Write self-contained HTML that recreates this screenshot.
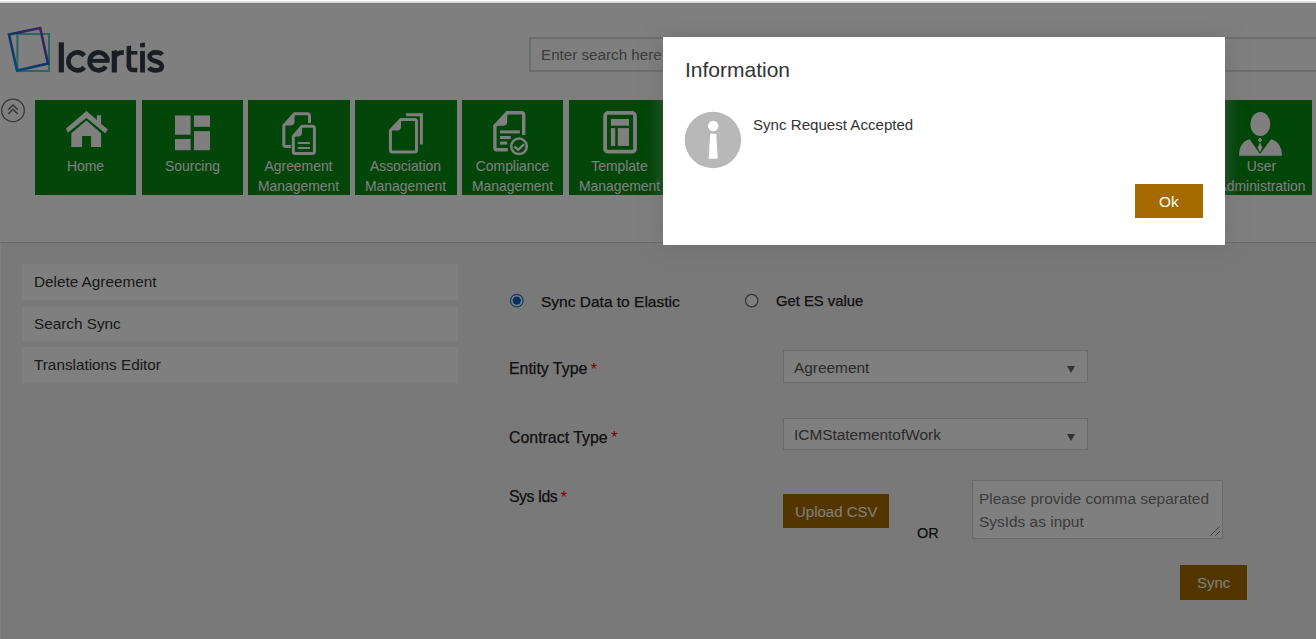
<!DOCTYPE html>
<html><head><meta charset="utf-8">
<style>
*{margin:0;padding:0;box-sizing:border-box}
html,body{width:1316px;height:639px;overflow:hidden;background:#fff;font-family:"Liberation Sans",sans-serif}
.a{position:absolute}
.t{position:absolute;white-space:nowrap;line-height:1}
#page{position:absolute;left:0;top:0;width:1316px;height:639px;background:#fff}
.tile{position:absolute;top:100px;width:101px;height:95px;background:#078c12}
.tl{position:absolute;left:0;width:101px;text-align:center;color:#fff;font-size:13.9px;line-height:20px;white-space:nowrap}
.side{position:absolute;left:22px;width:436px;height:36px;background:#fff}
.side span{position:absolute;left:12px;top:9.6px;font-size:15.3px;line-height:15px;color:#333;white-space:nowrap}
.lbl{position:absolute;font-size:15.5px;line-height:15px;color:#222;white-space:nowrap;-webkit-text-stroke:0.25px #222}
.req{color:#f00;margin-left:3.5px;font-size:16px;position:relative;top:0.5px;-webkit-text-stroke:0}
.sel{position:absolute;left:783px;width:305px;background:#fff;border:1px solid #d5d5d5}
.sel span{position:absolute;left:10px;font-size:15.4px;line-height:15px;color:#555;white-space:nowrap}
.arr{position:absolute;left:283px;width:0;height:0;border-left:4.5px solid transparent;border-right:4.5px solid transparent;border-top:7px solid #666}
.btn{position:absolute;background:#a66b00;color:#fff;white-space:nowrap;line-height:15px}
#ov{position:absolute;left:0;top:3px;width:1316px;height:636px;background:rgba(0,0,0,0.5)}
#modal{position:absolute;left:663px;top:37px;width:562px;height:208px;background:#fff;box-shadow:0 0 18px rgba(100,100,100,0.6)}
</style></head>
<body>
<div id="page">
  <!-- logo -->
  <svg class="a" style="left:0;top:20px" width="60" height="60" viewBox="0 20 60 60">
    <defs>
      <linearGradient id="lg" x1="0" y1="1" x2="1" y2="0">
        <stop offset="0" stop-color="#1c9ae6"/>
        <stop offset="0.5" stop-color="#2262c8"/>
        <stop offset="1" stop-color="#9840aa"/>
      </linearGradient>
    </defs>
    <rect x="17.4" y="34" width="31.6" height="37" fill="none" stroke="#5ec8c2" stroke-width="2.1"/>
    <path d="M9 34.6 L40.2 28 L48 63.6 L17 70.6 Z" fill="none" stroke="url(#lg)" stroke-width="2.6" stroke-linejoin="miter"/>
  </svg>
  <svg class="a" style="left:0;top:0" width="180" height="90" viewBox="0 0 180 90">
    <g fill="#343a44">
      <rect x="58.7" y="42.3" width="5.2" height="30.1"/>
      <rect x="88" y="58.9" width="21.4" height="3.9"/>
      <path d="M111.7 51 L116.9 50 L116.9 72.4 L111.7 72.4 Z"/>
      <path d="M126.6 46.2 L131.1 45.4 L131.1 67 L126.6 67 Z"/>
      <rect x="128.8" y="51" width="8.5" height="3.6"/>
      <path d="M140.1 51 L144.9 51 L144.9 72.4 L140.1 72.4 Z M140.1 43.2 L144.9 42.5 L144.9 47.3 L140.1 47.3 Z"/>
    </g>
    <g fill="none" stroke="#343a44" stroke-width="4.7">
      <path d="M84.26 55.65 A8.95 8.95 0 1 0 84.26 67.15"/>
      <path d="M107.5 60.6 A8.95 8.95 0 1 0 105.9 66.5"/>
      <path d="M114.3 57.5 C115.5 53.8 118.5 52.4 123.8 52.4" stroke-width="4.6"/>
      <path d="M128.85 64 C128.85 69.5 130.8 70.1 133 70.1 L137.3 70.1" stroke-width="4.5"/>
      <path d="M162.2 54.6 C160.5 52.5 158 52.4 155.7 52.4 C152.5 52.4 149.6 53.8 149.6 56.5 C149.6 59.5 152.5 60.3 155.7 61.2 C159 62.1 161.9 63.2 161.9 66.5 C161.9 69.2 159 70.4 155.7 70.4 C152.7 70.4 150.3 69.6 148.9 67.6" stroke-width="4.6"/>
    </g>
  </svg>

  <!-- search -->
  <div class="a" style="left:529px;top:37px;width:800px;height:35px;border:2px solid #dadada;background:#fff"></div>
  <div class="t" style="left:541px;top:47px;font-size:15.2px;color:#777">Enter search here...</div>

  <!-- collapse -->
  <svg class="a" style="left:0;top:97px" width="28" height="28" viewBox="0 0 28 28">
    <circle cx="13" cy="13.4" r="11.3" fill="none" stroke="#666" stroke-width="1.25"/>
    <path d="M8.2 12.8 L13 8.1 L17.8 12.8 M8.2 17 L13 12.3 L17.8 17" fill="none" stroke="#666" stroke-width="1.4"/>
  </svg>

  <div id="tiles">
<div class="tile" style="left:35px"><svg class="a" style="left:0;top:0" width="101" height="95" viewBox="0 0 101 95"><path d="M31.1 28.5 L51.4 11.1 L61.9 20.1 L61.9 15.2 L66.1 15.2 L66.1 23.7 L72.9 29.5 L70.2 33.2 L51.4 17.9 L32.8 32.8 Z" fill="#fff"/><path d="M51.4 20.6 L66.1 33.2 L66.1 46.9 L56.1 46.9 L56.1 36.1 L47.1 36.1 L47.1 46.9 L36.3 46.9 L36.3 33.2 Z" fill="#fff"/></svg><div class="tl" style="top:56px">Home</div></div>
<div class="tile" style="left:142px"><svg class="a" style="left:0;top:0" width="101" height="95" viewBox="0 0 101 95"><rect x="33" y="15.5" width="15.6" height="19.2" fill="#fff"/><rect x="33" y="39" width="15.6" height="11.2" fill="#fff"/><rect x="52" y="15.5" width="16" height="11.3" fill="#fff"/><rect x="52" y="31.2" width="16" height="19" fill="#fff"/></svg><div class="tl" style="top:56px">Sourcing</div></div>
<div class="tile" style="left:248px;width:102px"><svg class="a" style="left:0;top:0" width="101" height="95" viewBox="0 0 101 95"><path d="M42.9 46.5 L37.8 46.5 Q35.8 46.5 35.8 44.5 L35.8 25.5 L46.5 13.8 L59.5 13.8 Q61.5 13.8 61.5 15.8 L61.5 23" fill="none" stroke="#fff" stroke-width="3"/><path d="M35.8 25.5 L46.5 13.8 L46.5 21.5 Q46.5 25.5 42.5 25.5 Z" fill="#fff"/><path d="M45.3 36.5 L45.3 51.4 Q45.3 53.4 47.3 53.4 L64.4 53.4 Q66.4 53.4 66.4 51.4 L66.4 28.3 Q66.4 26.3 64.4 26.3 L54 26.3 Z" fill="none" stroke="#fff" stroke-width="3" stroke-linejoin="round"/><path d="M45.3 36.5 L54 26.3 L54 32.5 Q54 36.5 50 36.5 Z" fill="#fff"/><path d="M49.8 42.9 H61.9 M49.8 48 H61.9" stroke="#fff" stroke-width="2"/></svg><div class="tl" style="top:56px">Agreement</div><div class="tl" style="top:76px">Management</div></div>
<div class="tile" style="left:355px;width:102px"><svg class="a" style="left:0;top:0" width="101" height="95" viewBox="0 0 101 95"><path d="M51.1 14.7 H66.4 V44.6" fill="none" stroke="#fff" stroke-width="3"/><path d="M35.4 30.5 L35.4 50.1 Q35.4 52.1 37.4 52.1 L59.5 52.1 Q61.5 52.1 61.5 50.1 L61.5 21.4 Q61.5 19.4 59.5 19.4 L46 19.4 Z" fill="none" stroke="#fff" stroke-width="3" stroke-linejoin="round"/><path d="M35.4 30.5 L46 19.4 L46 26.5 Q46 30.5 42 30.5 Z" fill="#fff"/></svg><div class="tl" style="top:56px">Association</div><div class="tl" style="top:76px">Management</div></div>
<div class="tile" style="left:462px"><svg class="a" style="left:0;top:0" width="101" height="95" viewBox="0 0 101 95"><path d="M45.8 49.8 L34.9 49.8 Q32.9 49.8 32.9 47.8 L32.9 26 L45.2 12.7 L59.7 12.7 Q61.7 12.7 61.7 14.7 L61.7 35.1" fill="none" stroke="#fff" stroke-width="3.4"/><path d="M32.9 26 L45.2 12.7 L45.2 21.5 Q45.2 25.7 41 25.7 Z" fill="#fff"/><rect x="38" y="30.4" width="19.9" height="3" fill="#fff"/><rect x="38" y="36" width="10.8" height="3" fill="#fff"/><rect x="38" y="41.6" width="7.2" height="3" fill="#fff"/><circle cx="57" cy="46.3" r="7.8" fill="none" stroke="#fff" stroke-width="2.5"/><path d="M52.3 46.3 L56.1 49.8 L62.2 44.2" fill="none" stroke="#fff" stroke-width="2.5"/></svg><div class="tl" style="top:56px">Compliance</div><div class="tl" style="top:76px">Management</div></div>
<div class="tile" style="left:569px;width:102px"><svg class="a" style="left:0;top:0" width="101" height="95" viewBox="0 0 101 95"><rect x="36.1" y="12.9" width="29.9" height="38.8" rx="3" fill="none" stroke="#fff" stroke-width="3.8"/><rect x="41.9" y="19" width="18.1" height="6.7" fill="#fff"/><rect x="41.9" y="28.1" width="4.3" height="17.8" fill="#fff"/><rect x="48.8" y="28.1" width="11.2" height="17.8" fill="#fff"/></svg><div class="tl" style="top:56px">Template</div><div class="tl" style="top:76px">Management</div></div>
<div class="tile" style="left:675px"></div>
<div class="tile" style="left:782px"></div>
<div class="tile" style="left:889px"></div>
<div class="tile" style="left:996px"></div>
<div class="tile" style="left:1103px"></div>
<div class="tile" style="left:1211px"><svg class="a" style="left:-1px;top:0" width="101" height="95" viewBox="0 0 101 95"><ellipse cx="50.3" cy="23.9" rx="10" ry="12" fill="#fff"/><path d="M29.1 55.8 C29.1 46 33 41 39.6 39.3 L50 54 L61.1 39.3 C67.5 41 71.9 46 71.9 55.8 Z" fill="#fff"/><path d="M50 37.6 L52.2 40 L50 42.4 L47.8 40 Z M50 42.6 L52.4 47.5 L50 52.6 L47.6 47.5 Z" fill="#fff"/></svg><div class="tl" style="top:56px">User</div><div class="tl" style="top:76px">Administration</div></div>
</div>

  <!-- lower area -->
  <div class="a" style="left:0;top:242px;width:1316px;height:1px;background:#d2d2d2"></div>
  <div class="a" style="left:1px;top:243px;width:1315px;height:396px;background:#f3f3f3"></div>

  <div class="side" style="top:264px"><span>Delete Agreement</span></div>
  <div class="side" style="top:306px"><span>Search Sync</span></div>
  <div class="side" style="top:347px"><span>Translations Editor</span></div>

  <!-- radios -->
  <svg class="a" style="left:508px;top:292px" width="18" height="18" viewBox="0 0 18 18">
    <circle cx="8.8" cy="8.6" r="6.3" fill="#fff" stroke="#1a6ed8" stroke-width="1.2"/>
    <circle cx="8.8" cy="8.6" r="4.2" fill="#0b63ce"/>
  </svg>
  <div class="lbl" style="left:541px;top:294px">Sync Data to Elastic</div>
  <svg class="a" style="left:743px;top:292px" width="18" height="18" viewBox="0 0 18 18">
    <circle cx="8.7" cy="8.6" r="6.2" fill="#fff" stroke="#666" stroke-width="1.2"/>
  </svg>
  <div class="lbl" style="left:776px;top:294px;font-size:14.8px">Get ES value</div>

  <div class="lbl" style="left:509px;top:361.3px;font-size:15.9px">Entity Type<span class="req">*</span></div>
  <div class="sel" style="top:350px;height:33px"><span style="top:9px">Agreement</span><div class="arr" style="top:15px"></div></div>

  <div class="lbl" style="left:509px;top:429.5px;font-size:15.9px">Contract Type<span class="req">*</span></div>
  <div class="sel" style="top:418px;height:32px"><span style="top:7.5px">ICMStatementofWork</span><div class="arr" style="top:15px"></div></div>

  <div class="lbl" style="left:509px;top:489px;font-size:15.9px;letter-spacing:-0.55px">Sys Ids<span class="req">*</span></div>
  <div class="btn" style="left:783px;top:494px;width:106px;height:34px;font-size:15px;padding:10px 0 0 12px">Upload CSV</div>
  <div class="lbl" style="left:917px;top:526px;font-size:14.5px">OR</div>
  <div class="a" style="left:972px;top:480px;width:251px;height:59px;border:1px solid #d5d5d5;background:#fff"></div>
  <div class="t" style="left:979px;top:487px;font-size:15.45px;line-height:23px;color:#777;white-space:normal;width:240px">Please provide comma separated<br>SysIds as input</div>
  <svg class="a" style="left:1208px;top:524px" width="14" height="14" viewBox="0 0 14 14">
    <path d="M2 12 L12 2 M7 12 L12 7" stroke="#888" stroke-width="1"/>
  </svg>
  <div class="btn" style="left:1180px;top:565px;width:67px;height:35px;font-size:15px;padding:10px 0 0 17px">Sync</div>
</div>

<div id="ov"></div>
<div class="a" style="left:0;top:0;width:1316px;height:1px;background:#fff"></div>
<div class="a" style="left:0;top:1px;width:1316px;height:2px;background:#dcdde1"></div>
<div class="a" style="left:0;top:3px;width:1316px;height:1px;background:#7b7b7b"></div>

<div id="modal">
  <div class="t" style="left:22px;top:22px;font-size:21px;color:#333">Information</div>
  <svg class="a" style="left:21px;top:74px" width="58" height="58" viewBox="0 0 58 58">
    <circle cx="28.9" cy="29" r="28.2" fill="#b8b8b8"/>
    <circle cx="29.2" cy="15" r="5.2" fill="#fff"/>
    <path d="M26.2 22.8 L32.3 22.8 L33.7 47.8 L24.7 47.8 Z" fill="#fff"/>
  </svg>
  <div class="t" style="left:90px;top:80px;font-size:15.1px;color:#333">Sync Request Accepted</div>
  <div class="btn" style="left:472px;top:147px;width:68px;height:34px;font-size:15.3px;padding:10px 0 0 24px">Ok</div>
</div>
</body></html>
